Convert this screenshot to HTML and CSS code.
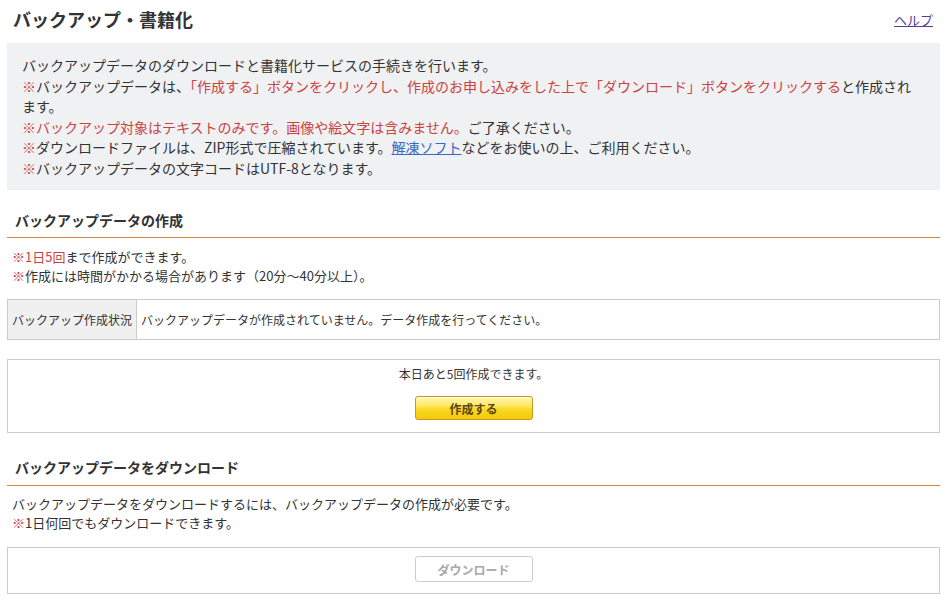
FILE: index.html
```html
<!doctype html>
<html lang="ja">
  <head>
    <meta charset="UTF-8" />
    <meta name="viewport" content="width=device-width, initial-scale=1.0" />
    <title>バックアップ・書籍化</title>
    <link rel="stylesheet" href="styles.css">
  </head>
  <body>
    <div class="page">
      <div class="page-head">
        <h1>バックアップ・書籍化</h1>
        <a href="#" class="help">ヘルプ</a>
      </div>

      <div class="info-box">
        <p>バックアップデータのダウンロードと書籍化サービスの手続きを行います。</p>
        <p><span class="red">※</span>バックアップデータは、<span class="red">「作成する」ボタンをクリックし、作成のお申し込みをした上で「ダウンロード」ボタンをクリックする</span>と作成され<br>ます。</p>
        <p><span class="red">※バックアップ対象はテキストのみです。画像や絵文字は含みません。</span>ご了承ください。</p>
        <p><span class="red">※</span>ダウンロードファイルは、ZIP形式で圧縮されています。<a href="#" class="link">解凍ソフト</a>などをお使いの上、ご利用ください。</p>
        <p><span class="red">※</span>バックアップデータの文字コードはUTF-8となります。</p>
      </div>

      <!-- 作成 -->
      <h2 class="section-title">バックアップデータの作成</h2>
      <div class="notes">
        <p><span class="red">※1日5回</span>まで作成ができます。</p>
        <p><span class="red">※</span>作成には時間がかかる場合があります（20分～40分以上）。</p>
      </div>

      <table class="status-table">
        <tr>
          <th>バックアップ作成状況</th>
          <td>バックアップデータが作成されていません。データ作成を行ってください。</td>
        </tr>
      </table>

      <div class="action-box create-box">
        <p>本日あと5回作成できます。</p>
        <button type="button" class="btn btn-yellow">作成する</button>
      </div>

      <!-- ダウンロード -->
      <h2 class="section-title second">バックアップデータをダウンロード</h2>
      <div class="notes notes-dl">
        <p>バックアップデータをダウンロードするには、バックアップデータの作成が必要です。</p>
        <p><span class="red">※</span>1日何回でもダウンロードできます。</p>
      </div>

      <div class="action-box download-box">
        <button type="button" class="btn btn-disabled" disabled>ダウンロード</button>
      </div>
    </div>
  </body>
</html>
```

FILE: styles.css
```css
body {
  margin: 0;
  font-family: "Noto Sans CJK JP", "Liberation Sans", sans-serif;
  color: #333;
  background-color: #ffffff;
}
p {
  margin: 0;
}
.page {
  padding: 0 10px 0 7px;
}
.page-head {
  display: flex;
  justify-content: space-between;
  align-items: center;
  padding-top: 6px;
}
h1 {
  margin: 0 0 0 6px;
  font-size: 18px;
  line-height: 26px;
  font-weight: bold;
  color: #333;
}
.help {
  font-size: 13px;
  color: #4f3f99;
  margin-right: 7px;
}
.info-box {
  margin-top: 11px;
  background-color: #f0f1f3;
  padding: 12px 15px 12px 15px;
  font-size: 14px;
  line-height: 20.5px;
}
.red {
  color: #c94343;
}
.link {
  color: #3b66c4;
}
.section-title {
  margin: 20px 0 0;
  padding: 0 0 7px 8px;
  font-size: 14px;
  line-height: 20px;
  font-weight: bold;
  color: #333;
  border-bottom: 1px solid #d9843a;
}
.section-title.second {
  margin-top: 24px;
  padding-bottom: 8px;
}
.notes {
  margin-top: 9px;
  padding-left: 5px;
  font-size: 13px;
  line-height: 19px;
}
.notes-dl {
  margin-top: 8px;
}
.status-table {
  width: 100%;
  margin-top: 14px;
  border-collapse: collapse;
  font-size: 12px;
}
.status-table th,
.status-table td {
  border: 1px solid #cccccc;
  height: 39px;
  padding: 0 4px;
  text-align: left;
  font-weight: normal;
}
.status-table th {
  width: 120px;
  background-color: #f0f0f0;
}
.action-box {
  border: 1px solid #cccccc;
  text-align: center;
  font-size: 12px;
  line-height: 18px;
}
.create-box {
  margin-top: 19px;
  padding: 5px 0 12px;
}
.download-box {
  margin-top: 15px;
  padding: 8px 0 11px;
}
.btn {
  width: 118px;
  font-family: inherit;
  font-size: 12px;
  font-weight: bold;
  border-radius: 3px;
  cursor: pointer;
}
.btn-yellow {
  margin-top: 13px;
  height: 24px;
  color: #5b4912;
  border: 1px solid #c09a22;
  background: linear-gradient(#fff6b2 0%, #ffe866 40%, #fbd824 55%, #f4c90a 100%);
  box-shadow: inset 0 1px 0 #fffbe0;
}
.btn-disabled {
  height: 26px;
  color: #a8a8a8;
  border: 1px solid #cccccc;
  background-color: #ffffff;
  cursor: default;
}
```
